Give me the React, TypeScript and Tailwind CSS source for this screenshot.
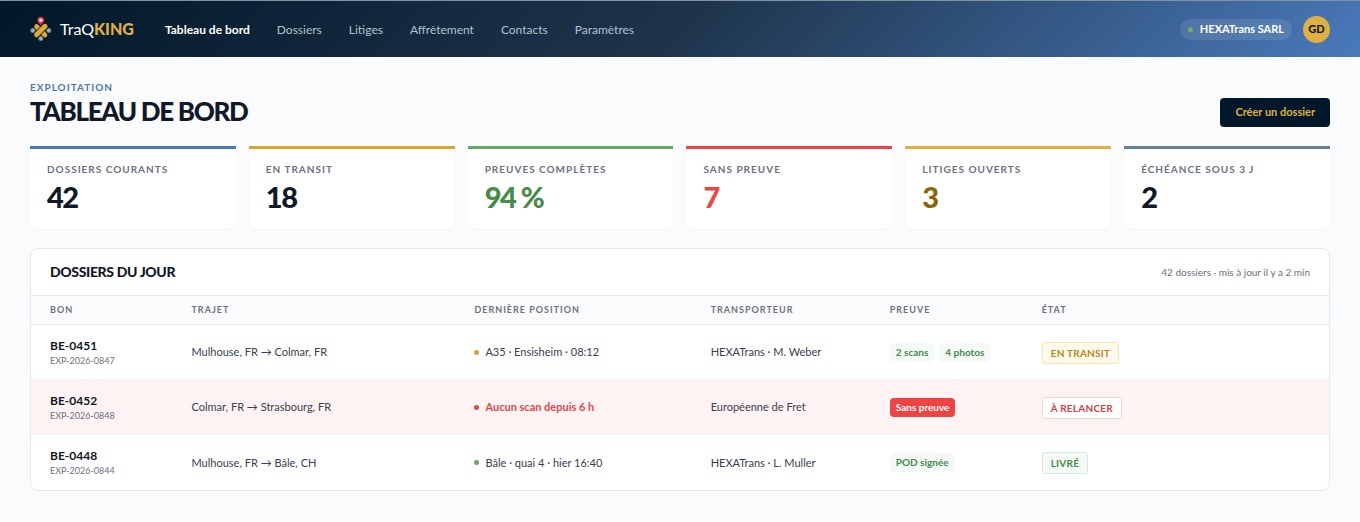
import clsx from "clsx";

const links = ["Dossiers", "Litiges", "Affrètement", "Contacts", "Paramètres"];

const stats = [
  { label: "Dossiers courants", value: "42", border: "border-[#4a78b5]", color: "text-[#111827]" },
  { label: "En transit", value: "18", border: "border-[#dba52f]", color: "text-[#111827]" },
  { label: "Preuves complètes", value: "94 %", border: "border-[#63a969]", color: "text-[#468c4b]" },
  { label: "Sans preuve", value: "7", border: "border-[#ef4444]", color: "text-[#ef4444]" },
  { label: "Litiges ouverts", value: "3", border: "border-[#e0b040]", color: "text-[#8a6508]" },
  { label: "Échéance sous 3 j", value: "2", border: "border-[#64809a]", color: "text-[#111827]" },
];

const columns = [
  { label: "Bon", width: "w-[10.9%]" },
  { label: "Trajet", width: "w-[21.8%]" },
  { label: "Dernière position", width: "w-[18.2%]" },
  { label: "Transporteur", width: "w-[13.8%]" },
  { label: "Preuve", width: "w-[11.7%]" },
  { label: "État", width: "w-[23.6%]" },
];

const rows = [
  {
    id: "BE-0451",
    ref: "EXP-2026-0847",
    route: "Mulhouse, FR → Colmar, FR",
    position: "A35 · Ensisheim · 08:12",
    dot: "bg-[#dba52f]",
    carrier: "HEXATrans · M. Weber",
    proofs: ["2 scans", "4 photos"],
    state: "En transit",
    stateClass: "border-[#f8e6ae] bg-[#fffaeb] text-[#b9861a]",
    late: false,
  },
  {
    id: "BE-0452",
    ref: "EXP-2026-0848",
    route: "Colmar, FR → Strasbourg, FR",
    position: "Aucun scan depuis 6 h",
    dot: "bg-[#e0484c]",
    carrier: "Européenne de Fret",
    proofs: ["Sans preuve"],
    state: "À relancer",
    stateClass: "border-[#f8d3d3] bg-white text-[#d64045]",
    late: true,
  },
  {
    id: "BE-0448",
    ref: "EXP-2026-0844",
    route: "Mulhouse, FR → Bâle, CH",
    position: "Bâle · quai 4 · hier 16:40",
    dot: "bg-[#63a969]",
    carrier: "HEXATrans · L. Muller",
    proofs: ["POD signée"],
    state: "Livré",
    stateClass: "border-[#d5e9db] bg-[#f5faf7] text-[#468c4b]",
    late: false,
  },
];

function Logo() {
  return (
    <svg viewBox="0 0 22 26" className="h-[26px] w-[22px]" aria-hidden="true">
      <g fill="#a9b1ba" stroke="#76828f" strokeWidth="1">
        <circle cx="2.800" cy="14.500" r="2.100" />
        <circle cx="18.800" cy="14.500" r="2.100" />
        <circle cx="10.800" cy="22.500" r="2.100" />
      </g>
      <g strokeLinecap="round">
        <path d="M6.500 10.500 15 19" stroke="#dfaa32" strokeWidth="4.600" />
        <path d="M6.300 19 15.300 10" stroke="#0b2030" strokeWidth="6.400" />
        <path d="M6.500 18.800 15.100 10.200" stroke="#dfaa32" strokeWidth="4.800" />
      </g>
      <path d="M10.800 9.500C9 7.300 7.300 6.200 7.300 4.200a3.500 3.500 0 0 1 7 0C14.300 6.200 12.600 7.300 10.800 9.500Z" fill="#e32636" />
      <circle cx="10.800" cy="4.200" r="1.800" fill="#fff" />
    </svg>
  );
}

function Header() {
  return (
    <header className="flex h-[57px] items-center border-t border-[#7c95a5] bg-[linear-gradient(135deg,#001829_0%,#1e344b_50%,#4a7abb_100%)] bg-origin-border px-[30px]">
      <a href="#" className="flex items-center gap-2 text-base text-white">
        <Logo />
        <span>
          TraQ<b className="font-black text-[#e0b040]">KING</b>
        </span>
      </a>
      <nav className="ml-[31px] flex items-center gap-[27px] pt-px text-xs text-[#b4c1cd]">
        <a href="#" className="font-bold text-white" aria-current="page">
          Tableau de bord
        </a>
        {links.map((link) => (
          <a key={link} href="#" className="hover:text-white">
            {link}
          </a>
        ))}
      </nav>
      <div className="ml-auto flex items-center gap-[11px]">
        <span className="flex h-[21px] items-center gap-[7px] rounded-full bg-white/10 px-2 text-[11px] font-bold text-white">
          <span className="size-[5px] rounded-full bg-[#6fae74]" />
          HEXATrans SARL
        </span>
        <button type="button" className="size-[27px] rounded-full bg-[#e0b040] text-[11px] font-black text-[#111827]">
          GD
        </button>
      </div>
    </header>
  );
}

function Stats() {
  return (
    <section className="mt-[19px] grid grid-cols-6 gap-[13px]">
      {stats.map((stat) => (
        <div key={stat.label} className={clsx("h-[83px] rounded-b-lg border-t-3 bg-white px-[17px] pt-[13px] shadow-[0_1px_2px_rgba(15,23,42,0.03)]", stat.border)}>
          <div className="text-[10px] leading-[14px] font-bold tracking-[1px] text-[#6b7280] uppercase">
            {stat.label}
          </div>
          <div className={clsx("mt-[5px] text-[29px] leading-[32px] font-black tracking-tighter", stat.color)}>
            {stat.value}
          </div>
        </div>
      ))}
    </section>
  );
}

function Files() {
  return (
    <section className="mt-[19px] overflow-hidden rounded-lg border border-[#e5e8ec] bg-white">
      <div className="flex h-[46px] items-center justify-between px-[19px]">
        <h2 className="text-[14px] leading-4 font-black tracking-tight text-[#111827] uppercase">Dossiers du jour</h2>
        <span className="text-[10px] text-[#6b7280]">42 dossiers · mis à jour il y a 2 min</span>
      </div>
      <table className="w-full table-fixed text-left text-[11px] text-[#374151]">
        <thead>
          <tr className="h-[29px] border-y border-[#e5e8ec] bg-[#f9fbfc]">
            {columns.map((column) => (
              <th key={column.label} className={clsx("pl-[19px] text-[9px] font-bold tracking-[1px] text-[#6b7280] uppercase", column.width)}>
                {column.label}
              </th>
            ))}
          </tr>
        </thead>
        <tbody>
          {rows.map((row) => (
            <tr key={row.id} className={clsx("h-[55px] border-b border-[#f3f4f6] last:border-b-0", row.late && "bg-[#fff3f3]")}>
              <td className="pt-px pl-[19px]">
                <div className="text-xs leading-4 font-bold text-[#111827]">{row.id}</div>
                <div className="text-[9px] leading-[14px] text-[#6b7280]">{row.ref}</div>
              </td>
              <td className="pt-px pl-[19px]">{row.route}</td>
              <td className="pt-px pl-[19px]">
                <div className={clsx("flex items-center gap-[6px]", row.late && "font-bold text-[#e0484c]")}>
                  <span className={clsx("size-[5px] rounded-full", row.dot)} />
                  {row.position}
                </div>
              </td>
              <td className="pt-px pl-[19px]">{row.carrier}</td>
              <td className="pt-px pl-[19px]">
                <div className="flex gap-[5px]">
                  {row.proofs.map((proof) => (
                    <span
                      key={proof}
                      className={clsx(
                        "rounded px-[6px] text-[10px] leading-[19px] font-bold",
                        row.late ? "bg-[#ef4444] text-white" : "bg-[#f6faf7] text-[#468c4b]",
                      )}
                    >
                      {proof}
                    </span>
                  ))}
                </div>
              </td>
              <td className="pt-px pl-[19px]">
                <span className={clsx("inline-block rounded-[3px] border px-2 text-[10px] leading-5 font-bold tracking-wide uppercase", row.stateClass)}>
                  {row.state}
                </span>
              </td>
            </tr>
          ))}
        </tbody>
      </table>
    </section>
  );
}

export default function App() {
  return (
    <div className="min-h-screen bg-[#f9fbfd] font-['Lato',sans-serif] text-[#111827]">
      <Header />
      <main className="px-[30px] pt-[23px] pb-8">
        <div className="flex items-end justify-between">
          <div>
            <div className="text-[10px] leading-[14px] font-bold tracking-[1px] text-[#4a78b5] uppercase">
              Exploitation
            </div>
            <h1 className="mt-px text-[26px] leading-8 font-black tracking-tighter uppercase">Tableau de bord</h1>
          </div>
          <button type="button" className="h-[29px] rounded bg-[#001829] px-[15px] text-[11px] font-bold text-[#e0b040]">
            Créer un dossier
          </button>
        </div>
        <Stats />
        <Files />
      </main>
    </div>
  );
}
